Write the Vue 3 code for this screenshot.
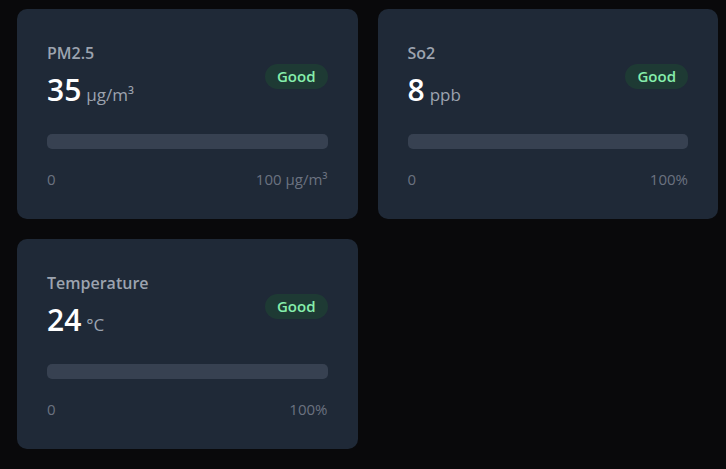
<script setup>
const metrics = [
  { name: 'PM2.5', value: 35, unit: 'µg/m³', status: 'Good', max: '100 µg/m³' },
  { name: 'So2', value: 8, unit: 'ppb', status: 'Good', max: '100%' },
  { name: 'Temperature', value: 24, unit: '°C', status: 'Good', max: '100%' },
]
</script>

<template>
  <main class="grid">
    <section v-for="m in metrics" :key="m.name" class="card">
      <header class="head">
        <div>
          <h2 class="name">{{ m.name }}</h2>
          <p class="reading"><span class="value">{{ m.value }}</span><span class="unit">{{ m.unit }}</span></p>
        </div>
        <span class="badge">{{ m.status }}</span>
      </header>
      <div class="track"></div>
      <div class="scale"><span>0</span><span>{{ m.max }}</span></div>
    </section>
  </main>
</template>

<style>
body {
  background: #09090b;
}
</style>

<style scoped>
.grid {
  display: grid;
  grid-template-columns: repeat(2, minmax(0, 1fr));
  gap: 20px;
  padding: 9px 8px 20px 17px;
  font-family: "Open Sans", "Noto Sans", sans-serif;
}
.card {
  padding: 30px;
  border-radius: 10px;
  background: #1f2937;
}
.head {
  display: flex;
  align-items: center;
  justify-content: space-between;
  margin-bottom: 20px;
}
.name {
  margin: 0;
  font-size: 16px;
  line-height: 28px;
  font-weight: 600;
  color: #9ca3af;
}
.reading {
  display: flex;
  align-items: baseline;
  gap: 5px;
  margin: 0;
  padding-bottom: 2px;
}
.value {
  font-size: 30px;
  line-height: 45px;
  font-weight: 600;
  color: #fff;
}
.unit {
  font-size: 17px;
  line-height: 20px;
  color: #9ca3af;
}
.badge {
  padding: 2px 12px;
  border-radius: 13px;
  background: #1e3a34;
  color: #86efac;
  font-size: 15px;
  line-height: 21px;
  font-weight: 600;
}
.track {
  height: 15px;
  border-radius: 5px;
  background: #374151;
}
.scale {
  display: flex;
  justify-content: space-between;
  margin-top: 20px;
  font-size: 15px;
  line-height: 20px;
  color: #6b7280;
}
</style>
